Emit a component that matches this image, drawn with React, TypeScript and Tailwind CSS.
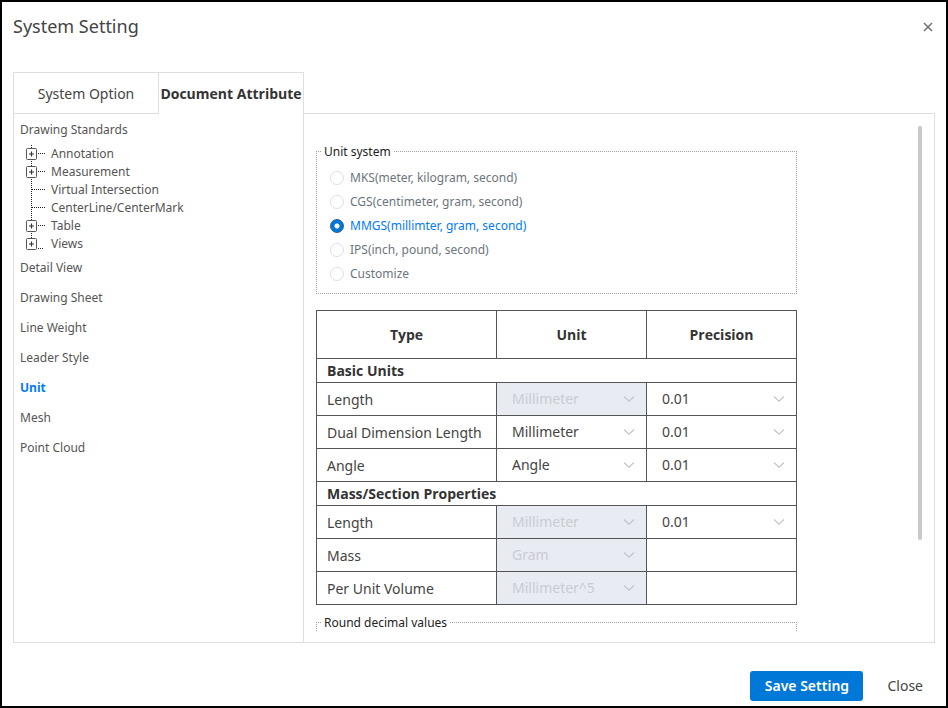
import React, { useState } from "react";

const treeNodes = [
  { label: "Annotation", expandable: true },
  { label: "Measurement", expandable: true },
  { label: "Virtual Intersection", expandable: false },
  { label: "CenterLine/CenterMark", expandable: false },
  { label: "Table", expandable: true },
  { label: "Views", expandable: true },
];

const sections = [
  "Detail View",
  "Drawing Sheet",
  "Line Weight",
  "Leader Style",
  "Unit",
  "Mesh",
  "Point Cloud",
];

const unitSystems = [
  { id: "mks", label: "MKS(meter, kilogram, second)" },
  { id: "cgs", label: "CGS(centimeter, gram, second)" },
  { id: "mmgs", label: "MMGS(millimter, gram, second)" },
  { id: "ips", label: "IPS(inch, pound, second)" },
  { id: "custom", label: "Customize" },
];

type UnitRow = {
  name: string;
  unit: string;
  locked: boolean;
  precision?: string;
};

const groups: { title: string; rows: UnitRow[] }[] = [
  {
    title: "Basic Units",
    rows: [
      { name: "Length", unit: "Millimeter", locked: true, precision: "0.01" },
      { name: "Dual Dimension Length", unit: "Millimeter", locked: false, precision: "0.01" },
      { name: "Angle", unit: "Angle", locked: false, precision: "0.01" },
    ],
  },
  {
    title: "Mass/Section Properties",
    rows: [
      { name: "Length", unit: "Millimeter", locked: true, precision: "0.01" },
      { name: "Mass", unit: "Gram", locked: true },
      { name: "Per Unit Volume", unit: "Millimeter^5", locked: true },
    ],
  },
];

function Branch({ expandable, last }: { expandable: boolean; last: boolean }) {
  return (
    <svg width="20" height="18" viewBox="0 0 20 18" fill="none" aria-hidden="true">
      <path
        d={last ? "M5.5 0V3" : "M5.5 0V18"}
        stroke="#222"
        strokeDasharray="1 1"
      />
      <path
        d={last ? "M12 13.5H18" : expandable ? "M12 8.5H19" : "M6 8.5H19"}
        stroke="#222"
        strokeDasharray="1 1"
      />
      {expandable && (
        <>
          <rect x="0.5" y="3.5" width="10" height="11" rx="1" fill="#fff" stroke="#555" />
          <path d="M3 9H8M5.5 6.5V11.5" stroke="#333" strokeWidth="1.2" />
        </>
      )}
    </svg>
  );
}

function Dropdown({ value, label, disabled = false }: { value: string; label: string; disabled?: boolean }) {
  return (
    <div className="relative h-8">
      <select
        aria-label={label}
        disabled={disabled}
        defaultValue={value}
        className="block h-8 w-full appearance-none bg-white pr-8 pb-px pl-[15px] text-sm text-[#444] opacity-100 outline-none disabled:bg-[#e8ebf1] disabled:text-[#c8ccd4]"
      >
        <option>{value}</option>
      </select>
      <svg
        className="pointer-events-none absolute top-3 right-[11px]"
        width="12"
        height="8"
        viewBox="0 0 12 8"
        fill="none"
        aria-hidden="true"
      >
        <path d="M1 1.5L6 6.2L11 1.5" stroke="#c0c4cc" strokeWidth="1.2" />
      </svg>
    </div>
  );
}

function Sidebar() {
  const [active, setActive] = useState("Unit");
  return (
    <nav className="w-[290px] shrink-0 border-r border-[#dedede] pt-px pl-1.5 text-[12px] text-[#555]">
      <button className="block h-[30px] text-left">Drawing Standards</button>
      <ul>
        {treeNodes.map((node, i) => (
          <li key={node.label} className="pl-1.5">
            <button className="flex h-[18px] items-center gap-[5px]">
              <Branch expandable={node.expandable} last={i === treeNodes.length - 1} />
              {node.label}
            </button>
          </li>
        ))}
      </ul>
      {sections.map((name) => (
        <button
          key={name}
          onClick={() => setActive(name)}
          className={
            name === active
              ? "block h-[30px] text-left font-['Open_Sans',sans-serif] font-bold text-[#007bff]"
              : "block h-[30px] text-left"
          }
        >
          {name}
        </button>
      ))}
    </nav>
  );
}

function UnitSystemFields() {
  const [selected, setSelected] = useState("mmgs");
  return (
    <fieldset className="mt-4 border border-dotted border-[#a0a0a0] px-[13px] pt-1.5 pb-[7px] text-[12px]">
      <legend className="-ml-2 px-0.5 pt-px leading-[17px] text-[#222]">Unit system</legend>
      {unitSystems.map((u) => (
        <label
          key={u.id}
          className={
            u.id === selected
              ? "flex h-6 items-center gap-1.5 text-[#007bff]"
              : "flex h-6 items-center gap-1.5 text-[#6c757d]"
          }
        >
          <input
            type="radio"
            name="unit-system"
            checked={u.id === selected}
            onChange={() => setSelected(u.id)}
            className="size-3.5 appearance-none rounded-full border border-[#dcdfe3] bg-white checked:border-[#2b5f92] checked:bg-[radial-gradient(circle,#fff_2px,#0078d7_3px)]"
          />
          {u.label}
        </label>
      ))}
    </fieldset>
  );
}

function UnitTable() {
  return (
    <table className="mt-4 w-full table-fixed border-collapse text-sm text-[#444]">
      <colgroup>
        <col className="w-[180px]" />
        <col className="w-[150px]" />
        <col className="w-[150px]" />
      </colgroup>
      <thead>
        <tr className="h-12">
          {["Type", "Unit", "Precision"].map((h) => (
            <th key={h} scope="col" className="border border-[#555] p-0 font-['Open_Sans',sans-serif] font-bold text-[#333]">
              {h}
            </th>
          ))}
        </tr>
      </thead>
      {groups.map((group) => (
        <tbody key={group.title}>
          <tr className="h-6">
            <th
              colSpan={3}
              scope="colgroup"
              className="border border-[#555] p-0 pl-2.5 text-left font-['Open_Sans',sans-serif] font-bold text-[#333]"
            >
              {group.title}
            </th>
          </tr>
          {group.rows.map((row) => (
            <tr key={row.name} className="h-[33px]">
              <td className="border border-[#555] p-0 pt-0.5 pl-2.5 whitespace-nowrap">{row.name}</td>
              <td className="border border-[#555] p-0">
                <Dropdown value={row.unit} label={`${row.name} unit`} disabled={row.locked} />
              </td>
              <td className="border border-[#555] p-0">
                {row.precision && <Dropdown value={row.precision} label={`${row.name} precision`} />}
              </td>
            </tr>
          ))}
        </tbody>
      ))}
    </table>
  );
}

export default function App() {
  return (
    <div className="flex h-screen flex-col border-2 border-black bg-white px-[11px] font-['Noto_Sans','Open_Sans',sans-serif] text-[#444]">
      <header className="flex h-[50px] shrink-0 items-center justify-between">
        <h1 className="pb-0.5 text-[18px] text-[#444]">System Setting</h1>
        <button aria-label="Close dialog" className="p-0.5">
          <svg width="10" height="10" viewBox="0 0 10 10" fill="none" aria-hidden="true">
            <path d="M1 1L9 9M9 1L1 9" stroke="#6b6f75" strokeWidth="1.5" />
          </svg>
        </button>
      </header>

      <div role="tablist" className="mt-5 flex h-[42px] shrink-0 text-sm">
        <button role="tab" aria-selected="false" className="w-[146px] border border-[#dedede] pt-0.5 whitespace-nowrap">
          System Option
        </button>
        <button
          role="tab"
          aria-selected="true"
          className="flex w-[145px] items-center justify-center border-t border-r border-[#dedede] font-['Open_Sans',sans-serif] font-bold whitespace-nowrap text-[#333]"
        >
          Document Attribute
        </button>
        <div className="flex-1 border-b border-[#dedede]" />
      </div>

      <div className="flex min-h-0 flex-1 border-x border-b border-[#dedede]">
        <Sidebar />
        <main className="flex min-w-0 flex-1 justify-between pt-3 pr-3 pb-[11px] pl-3">
          <div className="w-[481px] overflow-x-hidden overflow-y-auto [scrollbar-width:none]">
            <UnitSystemFields />
            <UnitTable />
            <fieldset className="mt-2 h-20 border border-dotted border-[#a0a0a0] px-[13px] text-[12px]">
              <legend className="-ml-2 px-0.5 pt-px leading-[17px] text-[#222]">Round decimal values</legend>
            </fieldset>
          </div>
          <div className="h-full w-1">
            <div className="h-[82%] rounded-sm bg-[#c8c8c8]" />
          </div>
        </main>
      </div>

      <footer className="flex shrink-0 justify-end gap-3 pt-7 pb-[5px] text-sm">
        <button className="h-[30px] min-w-[113px] rounded-[3px] bg-[#0078d7] px-3 font-semibold text-white">
          Save Setting
        </button>
        <button className="h-[30px] px-3">Close</button>
      </footer>
    </div>
  );
}
